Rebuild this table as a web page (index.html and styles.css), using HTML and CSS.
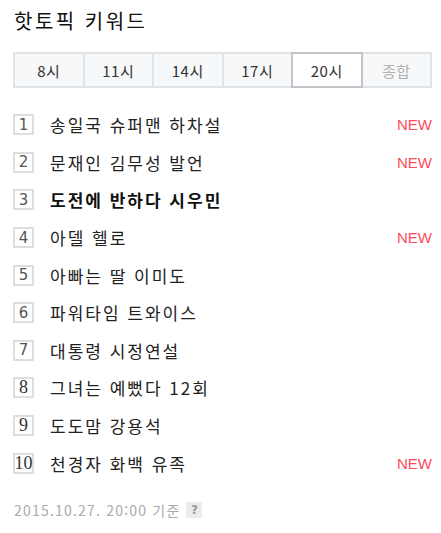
FILE: index.html
```html
<!DOCTYPE html>
<html lang="ko">
<head>
<meta charset="utf-8">
<link rel="stylesheet" href="styles.css">
</head>
<body>
<div class="panel">
  <h2 class="title">핫토픽 키워드</h2>
  <div class="tabs">
    <div class="tab">8시</div>
    <div class="tab">11시</div>
    <div class="tab">14시</div>
    <div class="tab">17시</div>
    <div class="tab tab-on">20시</div>
    <div class="tab tab-off">종합</div>
  </div>
  <ol class="list">
    <li class="row"><span class="num">1</span><span class="kw">송일국 슈퍼맨 하차설</span><span class="new">NEW</span></li>
    <li class="row"><span class="num">2</span><span class="kw">문재인 김무성 발언</span><span class="new">NEW</span></li>
    <li class="row"><span class="num">3</span><span class="kw kw-bold">도전에 반하다 시우민</span></li>
    <li class="row"><span class="num">4</span><span class="kw">아델 헬로</span><span class="new">NEW</span></li>
    <li class="row"><span class="num">5</span><span class="kw">아빠는 딸 이미도</span></li>
    <li class="row"><span class="num">6</span><span class="kw">파워타임 트와이스</span></li>
    <li class="row"><span class="num">7</span><span class="kw">대통령 시정연설</span></li>
    <li class="row"><span class="num num-serif">8</span><span class="kw">그녀는 예뻤다 12회</span></li>
    <li class="row"><span class="num num-serif">9</span><span class="kw">도도맘 강용석</span></li>
    <li class="row"><span class="num num-serif">10</span><span class="kw">천경자 화백 유족</span><span class="new">NEW</span></li>
  </ol>
  <div class="foot"><span>2015.10.27. 20:00 기준</span><span class="help">?</span></div>
</div>
</body>
</html>
```

FILE: styles.css
```css
html, body {
  margin: 0;
  padding: 0;
  background: #fff;
}
body {
  font-family: "Noto Sans CJK KR", "Noto Sans", sans-serif;
  color: #222;
}
.panel {
  padding: 8px 9px 0 13px;
}
.title {
  margin: 0;
  font-size: 20px;
  font-weight: normal;
  line-height: 26px;
  letter-spacing: 2.5px;
  color: #111;
  padding-left: 1px;
}
.tabs {
  margin-top: 18px;
  display: grid;
  grid-template-columns: repeat(6, 1fr);
  gap: 2px;
  padding: 2px;
  background: #e0e3e7;
  width: 415px;
}
.tab {
  height: 32px;
  background: #f7f8fa;
  display: flex;
  align-items: center;
  justify-content: center;
  font-size: 15px;
  color: #333;
  letter-spacing: 0.5px;
}
.tab-on {
  background: #fff;
  box-shadow: 0 0 0 2px #c1c5ca;
  position: relative;
}
.tab-off {
  color: #b0b0b0;
}
.list {
  list-style: none;
  margin: 18px 0 0;
  padding: 0;
}
.row {
  display: flex;
  align-items: center;
  height: 37.6px;
}
.num {
  box-sizing: border-box;
  width: 21px;
  height: 21px;
  border: 2px solid #dedede;
  display: flex;
  align-items: center;
  justify-content: center;
  font-family: "DejaVu Sans", sans-serif;
  font-size: 15px;
  color: #555;
  flex: none;
}
.num-serif {
  font-family: "Liberation Serif", serif;
  font-size: 18px;
  color: #333;
}
.kw {
  margin-left: 16px;
  font-size: 17px;
  letter-spacing: 2px;
  color: #222;
  flex: 1;
}
.kw-bold {
  font-weight: bold;
  color: #111;
}
.new {
  font-family: "Liberation Sans", sans-serif;
  font-size: 15px;
  color: #ff4c5b;
}
.foot {
  margin-top: 18px;
  display: flex;
  align-items: center;
  font-size: 14px;
  letter-spacing: 1.2px;
  color: #aaa;
  padding-left: 1px;
}
.help {
  margin-left: 6px;
  width: 16px;
  height: 16px;
  background: #ececec;
  color: #999;
  font-family: "DejaVu Sans", sans-serif;
  font-size: 12px;
  font-weight: bold;
  letter-spacing: 0;
  display: flex;
  align-items: center;
  justify-content: center;
}
```
